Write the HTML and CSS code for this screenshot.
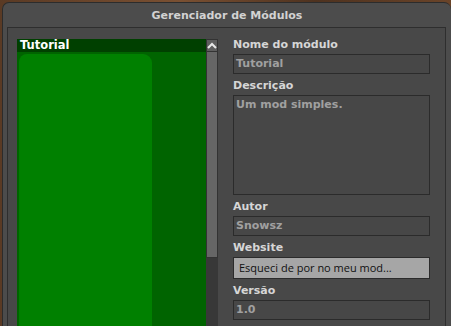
FILE: index.html
```html
<!DOCTYPE html>
<html lang="pt">
<head>
  <meta charset="UTF-8">
  <title>Gerenciador de Módulos</title>
  <link rel="stylesheet" href="styles.css">
</head>
<body>
  <div id="window">
    <div class="title">Gerenciador de Módulos</div>
    <div class="panel">
      <div class="mod-list">
        <div class="list-main">
          <div class="list-head">Tutorial</div>
          <div class="list-body"><div class="preview"></div></div>
        </div>
        <div class="scrollbar">
          <div class="scroll-up"><svg width="10" height="8" viewBox="0 0 10 8"><path d="M1 6 L5 2 L9 6" fill="none" stroke="#e8e8e8" stroke-width="2"/></svg></div>
          <div class="scroll-thumb"></div>
          <div class="scroll-track"></div>
        </div>
      </div>
      <div class="form">
        <div class="label">Nome do módulo</div>
        <div class="field">Tutorial</div>
        <div class="label">Descrição</div>
        <div class="field area">Um mod simples.</div>
        <div class="label">Autor</div>
        <div class="field">Snowsz</div>
        <div class="label">Website</div>
        <div class="field link">Esqueci de por no meu mod...</div>
        <div class="label">Versão</div>
        <div class="field">1.0</div>
      </div>
    </div>
  </div>
</body>
</html>
```

FILE: styles.css
```css
body { margin: 0; height: 326px; overflow: hidden; background: linear-gradient(90deg, #5a3a24, #7a5032 40%, #4e321f 70%, #6a4429); font-family: "DejaVu Sans", Verdana, sans-serif; }
#window { margin: 2px 0 0 2px; height: 330px; background: #4c4c4c; border: 1px solid #2c2c2c; border-right: none; border-radius: 7px 7px 0 0; display: flex; flex-direction: column; }
.title { height: 24px; line-height: 25px; text-align: center; color: #d2d2d2; font-size: 11px; font-weight: bold; }
.panel { flex: 1; margin: 0 5px 0 4px; border: 1px solid #2e2e2e; border-bottom: none; background: #484848; display: flex; padding: 5px 15px 0 9px; gap: 15px; }
.mod-list { margin-top: 6px; width: 201px; display: flex; }
.list-main { flex: 1; display: flex; flex-direction: column; }
.list-head { height: 13px; background: #004000; color: #fff; font-size: 11.5px; font-weight: bold; line-height: 13px; padding-left: 3px; }
.list-body { flex: 1; background: #006400; padding: 2px 0 0 2px; }
.preview { width: 133px; height: 100%; background: #008000; border-radius: 8px 9px 0 0; }
.scrollbar { width: 12px; display: flex; flex-direction: column; background: #383838; }
.scroll-up { height: 11px; background: #5e5e5e; border: 1px solid #333; display: flex; align-items: center; justify-content: center; }
.scroll-thumb { height: 205px; background: #666; border: 1px solid #333; border-top: none; }
.scroll-track { flex: 1; }
.form { width: 197px; display: flex; flex-direction: column; }
.label { height: 21px; box-sizing: border-box; padding: 5px 0 0 0; line-height: 14px; color: #d6d6d6; font-size: 11px; font-weight: bold; }
.field { height: 20px; box-sizing: border-box; border: 1px solid #2b2b2b; background: #474747; color: #a0a0a0; font-size: 11px; font-weight: bold; line-height: 18px; padding-left: 2px; }
.field.area { height: 100px; line-height: 14px; padding-top: 2px; }
.field.link { height: 22px; line-height: 20px; background: #a6a6a6; color: #111; font-weight: normal; font-family: "Open Sans", sans-serif; font-size: 11px; padding-left: 5px; }
```
